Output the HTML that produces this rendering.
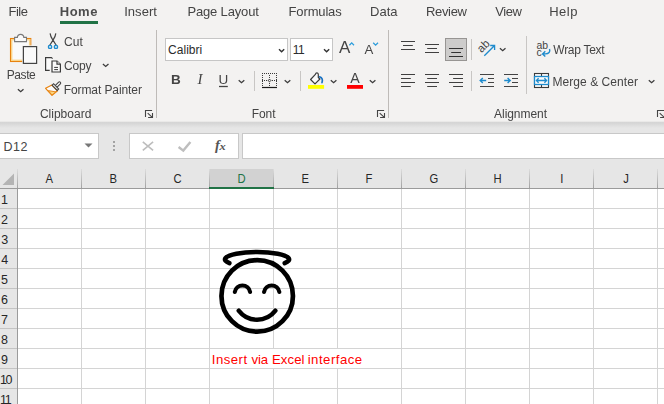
<!DOCTYPE html>
<html lang="en">
<head>
<meta charset="utf-8">
<title>Excel - Insert via Excel interface</title>
<style>
html,body{margin:0;padding:0;}
body{width:664px;height:404px;overflow:hidden;position:relative;background:#f3f2f1;font-family:"Liberation Sans",sans-serif;color:#444;}
.t{position:absolute;white-space:pre;line-height:normal;color:#444;}
.abs{position:absolute;}
#ribbon{left:0;top:0;width:664px;height:121px;background:#f3f2f1;}
#tabline{left:60px;top:21px;width:38px;height:3px;background:#217346;}
#shadow{left:0;top:121px;width:664px;height:7px;background:linear-gradient(#eae9e8 0,#eae9e8 10%,#d5d5d5 18%,#d6d6d6 30%,#e6e6e6 100%);}
#fbar{left:0;top:121px;width:664px;height:48px;background:#e6e6e6;}
.box{position:absolute;background:#fff;border:1px solid #c8c8c8;box-sizing:border-box;}
.combo{position:absolute;background:#fff;border:1px solid #c6c6c6;box-sizing:border-box;}
.vsep{position:absolute;width:1px;background:#c8c6c4;}
.vsep.g{background:#bebbb8;}
#grid{left:0;top:169px;width:664px;height:235px;background:#fff;}
#colhdr{left:0;top:169px;width:664px;height:19px;background:#e6e6e6;border-bottom:1px solid #9b9b9b;}
#rowhdr{left:0;top:189px;width:17px;height:215px;background:#e6e6e6;border-right:1px solid #9b9b9b;}
#selcol{left:209px;top:169px;width:65px;height:20px;background:#d2d2d2;}
#selline{left:209px;top:187px;width:65px;height:2px;background:#217346;}
.hl{position:absolute;height:1px;background:#d4d4d4;left:18px;width:646px;}
.vl{position:absolute;width:1px;background:#d4d4d4;top:189px;height:215px;}
.hsep{position:absolute;width:1px;background:linear-gradient(#dcdcdc,#a2a2a2);top:169px;height:19px;}
.rsep{position:absolute;height:1px;background:#c4c4c4;left:0;width:17px;}
svg{position:absolute;left:0;top:0;overflow:visible;}
</style>
</head>
<body>
<div id="ribbon" class="abs"></div>
<div id="tabline" class="abs"></div>
<div id="fbar" class="abs"></div>
<div id="shadow" class="abs"></div>

<!-- ribbon group separators -->
<div class="vsep g" style="left:156px;top:30px;height:88px"></div>
<div class="vsep g" style="left:388px;top:30px;height:88px"></div>
<div class="vsep" style="left:254px;top:71px;height:20px"></div>
<div class="vsep" style="left:300px;top:71px;height:20px"></div>
<div class="vsep" style="left:471px;top:39px;height:21px"></div>
<div class="vsep" style="left:471px;top:71px;height:20px"></div>
<div class="vsep" style="left:526px;top:36px;height:58px"></div>

<!-- font combos -->
<div class="combo" style="left:165px;top:38px;width:123px;height:23px"></div>
<div class="combo" style="left:290px;top:38px;width:43px;height:23px"></div>
<!-- selected bottom-align button -->
<div class="abs" style="left:445px;top:38px;width:22px;height:23px;background:#cdcccb;border:1px solid #979593;box-sizing:border-box"></div>

<!-- formula bar -->
<div class="box" style="left:-1px;top:133px;width:100px;height:26px"></div>
<div class="box" style="left:129px;top:133px;width:110px;height:26px"></div>
<div class="box" style="left:242px;top:133px;width:430px;height:26px"></div>

<!-- grid -->
<div id="grid" class="abs"></div>
<div id="colhdr" class="abs"></div>
<div id="rowhdr" class="abs"></div>
<div id="selcol" class="abs"></div>
<div class="hl" style="top:208px"></div>
<div class="rsep" style="top:208px"></div>
<div class="hl" style="top:228px"></div>
<div class="rsep" style="top:228px"></div>
<div class="hl" style="top:248px"></div>
<div class="rsep" style="top:248px"></div>
<div class="hl" style="top:268px"></div>
<div class="rsep" style="top:268px"></div>
<div class="hl" style="top:288px"></div>
<div class="rsep" style="top:288px"></div>
<div class="hl" style="top:308px"></div>
<div class="rsep" style="top:308px"></div>
<div class="hl" style="top:328px"></div>
<div class="rsep" style="top:328px"></div>
<div class="hl" style="top:348px"></div>
<div class="rsep" style="top:348px"></div>
<div class="hl" style="top:368px"></div>
<div class="rsep" style="top:368px"></div>
<div class="hl" style="top:388px"></div>
<div class="rsep" style="top:388px"></div>
<div class="hsep" style="left:17px"></div>
<div class="vl" style="left:81px"></div>
<div class="hsep" style="left:81px"></div>
<div class="vl" style="left:145px"></div>
<div class="hsep" style="left:145px"></div>
<div class="vl" style="left:209px"></div>
<div class="hsep" style="left:209px"></div>
<div class="vl" style="left:273px"></div>
<div class="hsep" style="left:273px"></div>
<div class="vl" style="left:337px"></div>
<div class="hsep" style="left:337px"></div>
<div class="vl" style="left:401px"></div>
<div class="hsep" style="left:401px"></div>
<div class="vl" style="left:465px"></div>
<div class="hsep" style="left:465px"></div>
<div class="vl" style="left:529px"></div>
<div class="hsep" style="left:529px"></div>
<div class="vl" style="left:593px"></div>
<div class="hsep" style="left:593px"></div>
<div class="vl" style="left:657px"></div>
<div class="hsep" style="left:657px"></div>
<div class="abs" style="left:273px;top:349px;width:1px;height:19px;background:#fff"></div>
<div class="abs" style="left:337px;top:349px;width:1px;height:19px;background:#fff"></div>

<div id="selline" class="abs"></div>
<svg width="664" height="404" viewBox="0 0 664 404" fill="none" stroke-linecap="butt">
<!-- Paste -->
<g id="ic-paste">
  <rect x="10.5" y="38.5" width="20.3" height="23" fill="#fafafa" stroke="#e8820e" stroke-width="1.1"/>
  <rect x="11.7" y="39.7" width="17.9" height="20.6" fill="none" stroke="#f9d489" stroke-width="1.4"/>
  <path d="M14.6 41.6 V37.4 H17.4 C17.6 33.3 23.6 33.3 23.8 37.4 H26.5 V41.6 Z" fill="#fafafa" stroke="#797979" stroke-width="1.1"/>
  <rect x="22.2" y="45.4" width="15.6" height="19" fill="#f3f2f1" stroke="none"/>
  <rect x="23.4" y="46.6" width="13.2" height="16.8" fill="#fafafa" stroke="#444" stroke-width="1.2"/>
</g>
<!-- Paste chevron -->
<path d="M17.9 89.35 L20.7 91.75 L23.5 89.35" stroke="#3b3b3b" stroke-width="1.3"/>
<!-- Cut -->
<g id="ic-cut">
  <path d="M50.1 33.3 C50.6 37 52 38.6 53 40.1 L56.2 45.3 M55.8 33.3 C55.3 37 54 38.6 53 40.1 L49.8 45.3" stroke="#444" stroke-width="1.2"/>
  <rect x="48.5" y="45.3" width="3.1" height="3.1" rx="1" stroke="#1e8bcd" stroke-width="1.3" fill="#cfe6f5"/>
  <rect x="54.4" y="45.3" width="3.1" height="3.1" rx="1" stroke="#1e8bcd" stroke-width="1.3" fill="#cfe6f5"/>
</g>
<!-- Copy -->
<g id="ic-copy" stroke="#3b3b3b" stroke-width="1.2">
  <path d="M49.7 70.3 H45.6 V57.6 H51.4 L52.6 58.6" fill="#fafafa"/>
  <path d="M52 61 H57 L60.4 64.2 V72 H52 Z" fill="#fafafa"/>
  <path d="M57 61 V64.2 H60.4" fill="#fafafa"/>
  <path d="M54.2 67.4 H58 M54.2 69.6 H58" stroke-width="1"/>
</g>
<!-- Copy chevron -->
<path d="M102.9 64.05 L105.7 66.45 L108.5 64.05" stroke="#3b3b3b" stroke-width="1.3"/>
<!-- Format painter -->
<g id="ic-fp">
  <path d="M51.9 85 L45.6 88.3 L52 95.3 L57.5 90.8 Z" fill="#fafafa" stroke="#e8820e" stroke-width="1.2" stroke-linejoin="round"/>
  <path d="M48.3 90.6 L55.8 91.9 L52 95 Z" fill="#fbd680" stroke="#e8820e" stroke-width="0.9" stroke-linejoin="round"/>
  <g transform="translate(55.4 87.1) rotate(45)">
    <rect x="-1.2" y="-6.9" width="2.4" height="6.4" rx="1.1" fill="#fafafa" stroke="#444" stroke-width="1.1"/>
    <rect x="-3.6" y="-1.05" width="7.2" height="2.1" fill="#fafafa" stroke="#444" stroke-width="1.1"/>
  </g>
</g>
<!-- Clipboard launcher -->
<g id="launch1" stroke="#444" stroke-width="1.1">
  <path d="M145.5 117 V110.5 H152.1"/>
  <path d="M147.7 113.2 L152.3 117.4 M152.5 112.9 V118 M148.1 117.5 H153"/>
</g>
<!-- Font launcher -->
<g id="launch2" stroke="#444" stroke-width="1.1" transform="translate(232 0)">
  <path d="M145.5 117 V110.5 H152.1"/>
  <path d="M147.7 113.2 L152.3 117.4 M152.5 112.9 V118 M148.1 117.5 H153"/>
</g>
<!-- Alignment launcher -->
<g id="launch3" stroke="#444" stroke-width="1.1" transform="translate(512 0)">
  <path d="M145.5 117 V110.5 H152.1"/>
  <path d="M147.7 113.2 L152.3 117.4 M152.5 112.9 V118 M148.1 117.5 H153"/>
</g>
<!-- combo chevrons -->
<path d="M279 49.2 L281.6 51.8 L284.2 49.2" stroke="#333" stroke-width="1.4"/>
<path d="M324 49.2 L326.6 51.8 L329.2 49.2" stroke="#333" stroke-width="1.4"/>
<!-- U underline -->
<path d="M219 86.5 H227.8" stroke="#444" stroke-width="1.3"/>
<!-- U chevron -->
<path d="M238.7 80.3 L241.5 82.7 L244.3 80.3" stroke="#3b3b3b" stroke-width="1.3"/>
<!-- Borders -->
<g id="ic-border">
  <path d="M262 73h1v1h-1zM264 73h1v1h-1zM266 73h1v1h-1zM268 73h1v1h-1zM270 73h1v1h-1zM272 73h1v1h-1zM274 73h1v1h-1zM276 73h1v1h-1zM262 75h1v1h-1zM276 75h1v1h-1zM262 77h1v1h-1zM276 77h1v1h-1zM262 79h1v1h-1zM276 79h1v1h-1zM262 81h1v1h-1zM276 81h1v1h-1zM262 83h1v1h-1zM276 83h1v1h-1zM262 85h1v1h-1zM276 85h1v1h-1zM269 75h1v1h-1zM269 77h1v1h-1zM269 83h1v1h-1zM269 85h1v1h-1zM262 80h1v1h-1zM264 80h1v1h-1zM266 80h1v1h-1zM272 80h1v1h-1zM274 80h1v1h-1zM276 80h1v1h-1z" fill="#3a3a3a" stroke="none"/>
  <path d="M269.5 79.1 L270.9 80.5 L269.5 81.9 L268.1 80.5 Z" fill="none" stroke="#2a2a2a" stroke-width="1"/>
  <rect x="262" y="86.9" width="15" height="1.2" fill="#1a1a1a" stroke="none"/>
</g>
<path d="M284.7 80.3 L287.5 82.7 L290.3 80.3" stroke="#3b3b3b" stroke-width="1.3"/>
<!-- Fill bucket -->
<g id="ic-fill">
  <path d="M310.6 79.5 L315 83.9 L319.9 79 L318.3 77.5 V74.6 C318.3 72.5 315.9 72.3 315.4 74.4 Z" stroke="#3a3a3a" stroke-width="1.2" fill="#fafafa" stroke-linejoin="round"/>
  <path d="M319.7 76.9 C322.4 77.4 322.8 80.2 322 82.6" stroke="#1a73c4" stroke-width="1.7" stroke-linecap="round"/>
  <rect x="308" y="85" width="16.1" height="3.8" fill="#ffff00" stroke="none"/>
</g>
<path d="M330.8 80.3 L333.6 82.7 L336.4 80.3" stroke="#3b3b3b" stroke-width="1.3"/>
<!-- Font colour bar -->
<rect x="347" y="85" width="16" height="3.8" fill="#ff0000" stroke="none"/>
<path d="M369.8 80.3 L372.6 82.7 L375.4 80.3" stroke="#3b3b3b" stroke-width="1.3"/>
<!-- grow/shrink carets -->
<path d="M349.4 45.2 L351.7 42.9 L354 45.2" stroke="#2b9cdb" stroke-width="1.3"/>
<path d="M373.2 42.8 L375.6 45.2 L378 42.8" stroke="#2b9cdb" stroke-width="1.3"/>
<!-- Align top/middle/bottom -->
<g stroke="#404040" stroke-width="1.2">
  <path d="M401 41.5 H415 M403 45.5 H412.8 M401 49.5 H415"/>
  <path d="M425 44.5 H439 M427.2 48.5 H437 M425 52.5 H439"/>
  <path d="M449 48.5 H463 M451.2 52.5 H461 M449 56.5 H463" stroke="#333"/>
  <!-- left/center/right -->
  <path d="M401 74.5 H415 M401 78.5 H410.8 M401 82.5 H415 M401 86.5 H410.8"/>
  <path d="M425 74.5 H439 M427.2 78.5 H437 M425 82.5 H439 M427.2 86.5 H437"/>
  <path d="M449 74.5 H463 M453.1 78.5 H463 M449 82.5 H463 M453.1 86.5 H463"/>
</g>
<!-- Orientation -->
<g id="ic-orient">
  <text x="0" y="0" transform="translate(481.5 53.3) rotate(-45)" font-family="Liberation Sans, sans-serif" font-size="11.5" fill="#444" stroke="none">ab</text>
  <path d="M484.3 55.7 L494.3 45.8 M490.2 45.5 H494.6 V49.9" stroke="#1e8bcd" stroke-width="1.3"/>
</g>
<path d="M499.9 48.35 L502.7 50.75 L505.5 48.35" stroke="#3b3b3b" stroke-width="1.3"/>
<!-- Indent -->
<g id="ic-indent">
  <path d="M480 74.5 H494 M488 78.5 H494 M488 82.5 H494 M480 86.5 H494" stroke="#444" stroke-width="1.1"/>
  <path d="M480.2 80.5 H486.2 M482.8 77.9 L480.2 80.5 L482.8 83.1" stroke="#1e8bcd" stroke-width="1.4"/>
  <path d="M504 74.5 H518 M512 78.5 H518 M512 82.5 H518 M504 86.5 H518" stroke="#444" stroke-width="1.1"/>
  <path d="M504.2 80.5 H510.2 M507.6 77.9 L510.2 80.5 L507.6 83.1" stroke="#1e8bcd" stroke-width="1.4"/>
</g>
<!-- Wrap text -->
<g id="ic-wrap">
  <text x="536.4" y="48.6" font-family="Liberation Sans, sans-serif" font-size="10.5" fill="#444" stroke="none" textLength="11.6" lengthAdjust="spacingAndGlyphs">ab</text>
  <text x="536.4" y="55.8" font-family="Liberation Sans, sans-serif" font-size="10.5" fill="#444" stroke="none">c</text>
  <path d="M549.5 48.9 C550.6 52 548.6 53.9 545.6 53.9 H542.8 M545.3 51.3 L542.6 53.9 L545.3 56.5" stroke="#1e8bcd" stroke-width="1.4"/>
</g>
<!-- Merge & center -->
<g id="ic-merge">
  <rect x="534.5" y="73.5" width="14" height="14" stroke="#3b3b3b" stroke-width="1.1" fill="#fafafa"/>
  <path d="M541.5 74 V87" stroke="#3b3b3b" stroke-width="1.1"/>
  <rect x="534.5" y="76.5" width="14" height="8" stroke="#1e8bcd" stroke-width="1.3" fill="#fafafa"/>
  <path d="M536.4 80.5 H546.6 M538.6 78.3 L536.4 80.5 L538.6 82.7 M544.4 78.3 L546.6 80.5 L544.4 82.7" stroke="#1e8bcd" stroke-width="1.3"/>
</g>
<path d="M648.8 80.3 L651.6 82.7 L654.4 80.3" stroke="#3b3b3b" stroke-width="1.3"/>
<!-- Name box dropdown arrow -->
<path d="M84.5 143.5 H92.5 L88.5 147.5 Z" fill="#777" stroke="none"/>
<!-- dots -->
<g fill="#a3a3a3" stroke="none"><rect x="113" y="141" width="2" height="2"/><rect x="113" y="145" width="2" height="2"/><rect x="113" y="149" width="2" height="2"/></g>
<!-- X / check / fx -->
<path d="M142.8 141.9 L153.1 150.4 M153.1 141.9 L142.8 150.4" stroke="#bdbdbd" stroke-width="1.6"/>
<path d="M178.6 147 L183.3 150.6 L190.4 141.9" stroke="#bebebe" stroke-width="2.4"/>
<text x="214.9" y="149.6" font-family="Liberation Serif, serif" font-style="italic" font-weight="bold" font-size="14.5" fill="#555" stroke="none">f</text>
<text x="219.6" y="150" font-family="Liberation Serif, serif" font-style="italic" font-weight="bold" font-size="10" fill="#555" stroke="none" textLength="6.2" lengthAdjust="spacingAndGlyphs">x</text>
<!-- select all triangle -->
<path d="M14 173.5 V185 H2.5 Z" fill="#b4b4b4" stroke="none"/>
<!-- Smiley -->
<g id="smiley" stroke="#000" fill="none" stroke-linecap="round">
  <path d="M229.4 263.15 A32.05 7.4 0 1 1 284.7 263.15" stroke-width="4.5"/>
  <circle cx="257.2" cy="295.9" r="35.75" stroke-width="4.7"/>
  <path d="M234.8 292 A7.76 7.76 0 0 1 250.1 292" stroke-width="4.15"/>
  <path d="M264.05 292 A7.76 7.76 0 0 1 279.35 292" stroke-width="4.15"/>
  <path d="M238.7 310.7 A23.1 23.1 0 0 0 275.4 310.7" stroke-width="4.4"/>
</g>
</svg>


<span class="t" style="left:168.10px;top:42.64px;font-size:12px;letter-spacing:0.026px;color:#2b2b2b">Calibri</span>
<span class="t" style="left:292.80px;top:42.64px;font-size:12px;letter-spacing:-0.583px;color:#2b2b2b">11</span>
<span class="t" style="left:3.60px;top:140.09px;font-size:12.5px;letter-spacing:0.435px;">D12</span>
<span class="t" style="left:211.77px;top:351.85px;font-size:13.2px;letter-spacing:0.475px;color:#ff0000">Insert </span>
<span class="t" style="left:251.40px;top:351.85px;font-size:13.2px;letter-spacing:-0.079px;color:#ff0000">via </span>
<span class="t" style="left:271.97px;top:351.85px;font-size:13.2px;letter-spacing:0.081px;color:#ff0000">Excel </span>
<span class="t" style="left:307.68px;top:351.85px;font-size:13.2px;letter-spacing:0.492px;color:#ff0000">interface</span>
<span class="t" style="left:45.33px;top:171.99px;font-size:12.5px;color:#262626;transform:scaleX(.9)">A</span>
<span class="t" style="left:109.15px;top:171.99px;font-size:12.5px;color:#262626;transform:scaleX(.9)">B</span>
<span class="t" style="left:172.90px;top:171.99px;font-size:12.5px;color:#262626;transform:scaleX(.9)">C</span>
<span class="t" style="left:236.78px;top:171.99px;font-size:12.5px;color:#217346;transform:scaleX(.9)">D</span>
<span class="t" style="left:301.10px;top:171.99px;font-size:12.5px;color:#262626;transform:scaleX(.9)">E</span>
<span class="t" style="left:365.43px;top:171.99px;font-size:12.5px;color:#262626;transform:scaleX(.9)">F</span>
<span class="t" style="left:428.80px;top:171.99px;font-size:12.5px;color:#262626;transform:scaleX(.9)">G</span>
<span class="t" style="left:492.98px;top:171.99px;font-size:12.5px;color:#262626;transform:scaleX(.9)">H</span>
<span class="t" style="left:559.75px;top:171.99px;font-size:12.5px;color:#262626;transform:scaleX(.9)">I</span>
<span class="t" style="left:622.75px;top:171.99px;font-size:12.5px;color:#262626;transform:scaleX(.9)">J</span>
<span class="t" style="left:0.95px;top:192.89px;font-size:12.5px;color:#262626">1</span>
<span class="t" style="left:1.12px;top:212.89px;font-size:12.5px;color:#262626">2</span>
<span class="t" style="left:1.15px;top:232.89px;font-size:12.5px;color:#262626">3</span>
<span class="t" style="left:1.17px;top:252.89px;font-size:12.5px;color:#262626">4</span>
<span class="t" style="left:1.12px;top:272.89px;font-size:12.5px;color:#262626">5</span>
<span class="t" style="left:1.07px;top:292.89px;font-size:12.5px;color:#262626">6</span>
<span class="t" style="left:1.12px;top:312.89px;font-size:12.5px;color:#262626">7</span>
<span class="t" style="left:1.12px;top:332.89px;font-size:12.5px;color:#262626">8</span>
<span class="t" style="left:1.12px;top:352.89px;font-size:12.5px;color:#262626">9</span>
<span class="t" style="left:-0.05px;top:372.89px;font-size:12.5px;letter-spacing:-1.502px;color:#262626">10</span>
<span class="t" style="left:-0.05px;top:392.89px;font-size:12.5px;letter-spacing:-1.124px;color:#262626">11</span>
<div id="labels" style="position:absolute;left:0;top:0;width:664px;height:404px;will-change:transform">
<span class="t" style="left:8.38px;top:4.23px;font-size:13px;letter-spacing:-0.435px;">File</span>
<span class="t" style="left:59.79px;top:4.23px;font-size:13px;letter-spacing:0.506px;font-weight:bold;color:#4d4d4d">Home</span>
<span class="t" style="left:124.18px;top:4.23px;font-size:13px;letter-spacing:0.052px;">Insert</span>
<span class="t" style="left:187.38px;top:4.23px;font-size:13px;letter-spacing:-0.153px;">Page Layout</span>
<span class="t" style="left:288.58px;top:4.23px;font-size:13px;letter-spacing:-0.151px;">Formulas</span>
<span class="t" style="left:369.98px;top:4.23px;font-size:13px;letter-spacing:0.058px;">Data</span>
<span class="t" style="left:425.98px;top:4.23px;font-size:13px;letter-spacing:-0.334px;">Review</span>
<span class="t" style="left:495.30px;top:4.23px;font-size:13px;letter-spacing:-0.467px;">View</span>
<span class="t" style="left:549.18px;top:4.23px;font-size:13px;letter-spacing:0.535px;">Help</span>
<span class="t" style="left:6.75px;top:67.94px;font-size:12px;letter-spacing:-0.428px;">Paste</span>
<span class="t" style="left:64.00px;top:34.94px;font-size:12px;letter-spacing:0.055px;">Cut</span>
<span class="t" style="left:64.00px;top:59.14px;font-size:12px;letter-spacing:-0.138px;">Copy</span>
<span class="t" style="left:63.65px;top:82.94px;font-size:12px;letter-spacing:-0.086px;">Format Painter</span>
<span class="t" style="left:39.90px;top:106.74px;font-size:12px;letter-spacing:0.008px;">Clipboard</span>
<span class="t" style="left:171.04px;top:72.28px;font-size:13.5px;font-weight:bold">B</span>
<span class="t" style="left:197.60px;top:71.14px;font-size:15px;font-style:italic;font-family:'Liberation Serif',serif">I</span>
<span class="t" style="left:218.55px;top:72.28px;font-size:13.5px;">U</span>
<span class="t" style="left:338.94px;top:38.22px;font-size:17px;">A</span>
<span class="t" style="left:364.57px;top:41.65px;font-size:13.2px;">A</span>
<span class="t" style="left:350.28px;top:70.45px;font-size:14.2px;">A</span>
<span class="t" style="left:251.65px;top:106.74px;font-size:12px;letter-spacing:-0.026px;">Font</span>
<span class="t" style="left:553.35px;top:42.94px;font-size:12px;letter-spacing:-0.295px;">Wrap Text</span>
<span class="t" style="left:552.45px;top:74.94px;font-size:12px;letter-spacing:0.057px;">Merge &amp; Center</span>
<span class="t" style="left:494.10px;top:106.74px;font-size:12px;letter-spacing:-0.060px;">Alignment</span>
</div>
</body>
</html>
